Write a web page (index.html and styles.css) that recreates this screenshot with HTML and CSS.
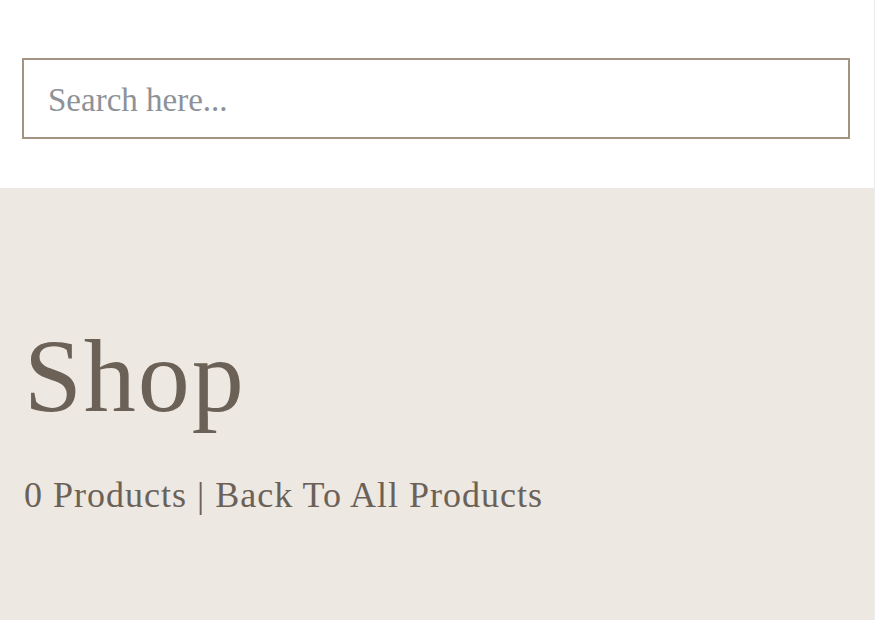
FILE: index.html
```html
<!DOCTYPE html>
<html lang="en">
<head>
<meta charset="utf-8">
<title>Shop</title>
<link rel="stylesheet" href="styles.css">
</head>
<body>
<div class="page">
  <section class="search-area">
    <input class="search-input" type="text" placeholder="Search here...">
  </section>
  <section class="hero">
    <h1 class="hero-title">Shop</h1>
    <p class="hero-meta">0 Products | Back To All Products</p>
  </section>
</div>
</body>
</html>
```

FILE: styles.css
```css
html, body {
  margin: 0;
  padding: 0;
  background: #ffffff;
}
.page {
  width: 874px;
  height: 620px;
  border-right: 1px solid #ececec;
  overflow: hidden;
  font-family: "Liberation Serif", "Times New Roman", serif;
}
.search-area {
  padding: 58px 24px 49px 22px;
  background: #ffffff;
}
.search-input {
  display: block;
  box-sizing: border-box;
  width: 100%;
  height: 81px;
  margin: 0;
  border: 2px solid #a39482;
  border-radius: 0;
  padding: 4px 24px 0;
  font-family: "Liberation Serif", "Times New Roman", serif;
  font-size: 33px;
  color: #6b6157;
  background: #ffffff;
  outline: none;
}
.search-input::placeholder {
  color: #8d9298;
  opacity: 1;
}
.hero {
  background: #ede8e2;
  height: 432px;
  padding: 0 24px;
  box-sizing: border-box;
  display: flex;
  flex-direction: column;
  color: #6b6157;
}
.hero-title {
  margin: 128px 0 0;
  font-weight: 400;
  font-size: 104px;
  line-height: 120px;
  letter-spacing: 2px;
}
.hero-meta {
  margin: 37px 0 0;
  font-size: 36px;
  line-height: 44px;
  letter-spacing: 1px;
}
```
